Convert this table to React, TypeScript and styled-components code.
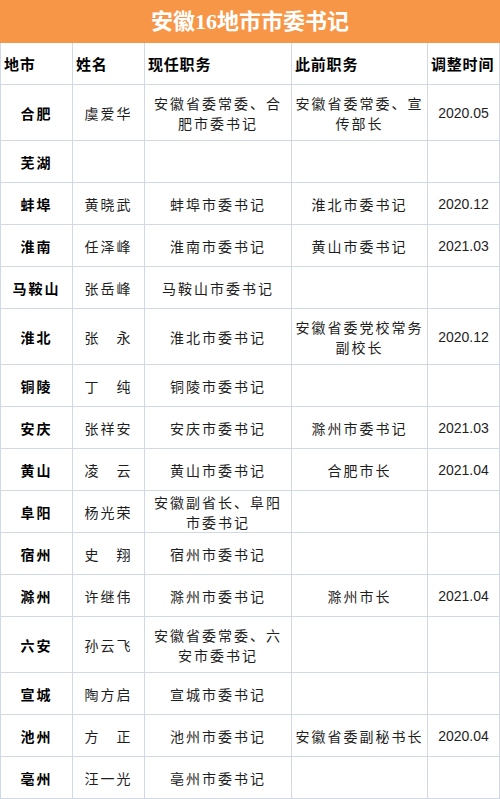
import React from 'react';
import styled, { createGlobalStyle } from 'styled-components';

interface Row {
  city: string;
  name: string;
  current: string[];
  previous: string[];
  date: string;
  tall?: boolean;
}

const GlobalStyle = createGlobalStyle`
  html, body {
    margin: 0;
    padding: 0;
    background: #ffffff;
  }
`;

const CJK = `"Noto Sans CJK SC", "Noto Sans", sans-serif`;
const LINE = '#d2d9e6';

// 页面外框
const Sheet = styled.div`
  width: 500px;
  background: #ffffff;
`;

const TitleBar = styled.div`
  height: 43px;
  line-height: 43px;
  background: #f79646;
  color: #ffffff;
  text-align: center;
  font-family: "Liberation Serif", ${CJK};
  font-weight: 700;
  font-size: 22px;
`;

const Grid = styled.div`
  display: grid;
  grid-template-columns: 71px 71px 146px 135px 71px;
  gap: 1px;
  padding: 0 1px 1px 1px;
  background: ${LINE};
`;

const HeadCell = styled.div`
  height: 41px;
  display: flex;
  align-items: center;
  padding-left: 3px;
  background: #ffffff;
  color: #000000;
  font-family: ${CJK};
  font-weight: 700;
  font-size: 15px;
  letter-spacing: 0.8px;
`;

const Cell = styled.div<{ $tall?: boolean; $bold?: boolean; $latin?: boolean }>`
  height: ${p => (p.$tall ? 55 : 41)}px;
  display: flex;
  flex-direction: column;
  align-items: center;
  justify-content: center;
  background: #ffffff;
  color: ${p => (p.$bold ? '#000000' : '#1e1e1e')};
  font-family: ${p => (p.$latin ? `"Liberation Sans", Arial, sans-serif` : CJK)};
  font-weight: ${p => (p.$bold ? 700 : 400)};
  font-size: 14px;
  letter-spacing: ${p => (p.$latin ? 0 : 2)}px;
  line-height: 20px;
  text-align: center;
  white-space: nowrap;
`;

const Line = styled.span`
  display: block;
`;

const rows: Row[] = [
  { city: '合肥', name: '虞爱华', current: ['安徽省委常委、合', '肥市委书记'], previous: ['安徽省委常委、宣', '传部长'], date: '2020.05', tall: true },
  { city: '芜湖', name: '', current: [], previous: [], date: '' },
  { city: '蚌埠', name: '黄晓武', current: ['蚌埠市委书记'], previous: ['淮北市委书记'], date: '2020.12' },
  { city: '淮南', name: '任泽峰', current: ['淮南市委书记'], previous: ['黄山市委书记'], date: '2021.03' },
  { city: '马鞍山', name: '张岳峰', current: ['马鞍山市委书记'], previous: [], date: '' },
  { city: '淮北', name: '张　永', current: ['淮北市委书记'], previous: ['安徽省委党校常务', '副校长'], date: '2020.12', tall: true },
  { city: '铜陵', name: '丁　纯', current: ['铜陵市委书记'], previous: [], date: '' },
  { city: '安庆', name: '张祥安', current: ['安庆市委书记'], previous: ['滁州市委书记'], date: '2021.03' },
  { city: '黄山', name: '凌　云', current: ['黄山市委书记'], previous: ['合肥市长'], date: '2021.04' },
  { city: '阜阳', name: '杨光荣', current: ['安徽副省长、阜阳', '市委书记'], previous: [], date: '' },
  { city: '宿州', name: '史　翔', current: ['宿州市委书记'], previous: [], date: '' },
  { city: '滁州', name: '许继伟', current: ['滁州市委书记'], previous: ['滁州市长'], date: '2021.04' },
  { city: '六安', name: '孙云飞', current: ['安徽省委常委、六', '安市委书记'], previous: [], date: '', tall: true },
  { city: '宣城', name: '陶方启', current: ['宣城市委书记'], previous: [], date: '' },
  { city: '池州', name: '方　正', current: ['池州市委书记'], previous: ['安徽省委副秘书长'], date: '2020.04' },
  { city: '亳州', name: '汪一光', current: ['亳州市委书记'], previous: [], date: '' },
];

const headers = ['地市', '姓名', '现任职务', '此前职务', '调整时间'];

const Lines: React.FC<{ items: string[] }> = ({ items }) => (
  <>
    {items.map((t, i) => (
      <Line key={i}>{t}</Line>
    ))}
  </>
);

const App: React.FC = () => {
  return (
    <Sheet>
      <GlobalStyle />
      <TitleBar>安徽16地市市委书记</TitleBar>
      <Grid>
        {headers.map(h => (
          <HeadCell key={h}>{h}</HeadCell>
        ))}
        {rows.map(r => (
          <React.Fragment key={r.city}>
            <Cell $tall={r.tall} $bold>{r.city}</Cell>
            <Cell $tall={r.tall}>{r.name}</Cell>
            <Cell $tall={r.tall}><Lines items={r.current} /></Cell>
            <Cell $tall={r.tall}><Lines items={r.previous} /></Cell>
            <Cell $tall={r.tall} $latin>{r.date}</Cell>
          </React.Fragment>
        ))}
      </Grid>
    </Sheet>
  );
};

export default App;
